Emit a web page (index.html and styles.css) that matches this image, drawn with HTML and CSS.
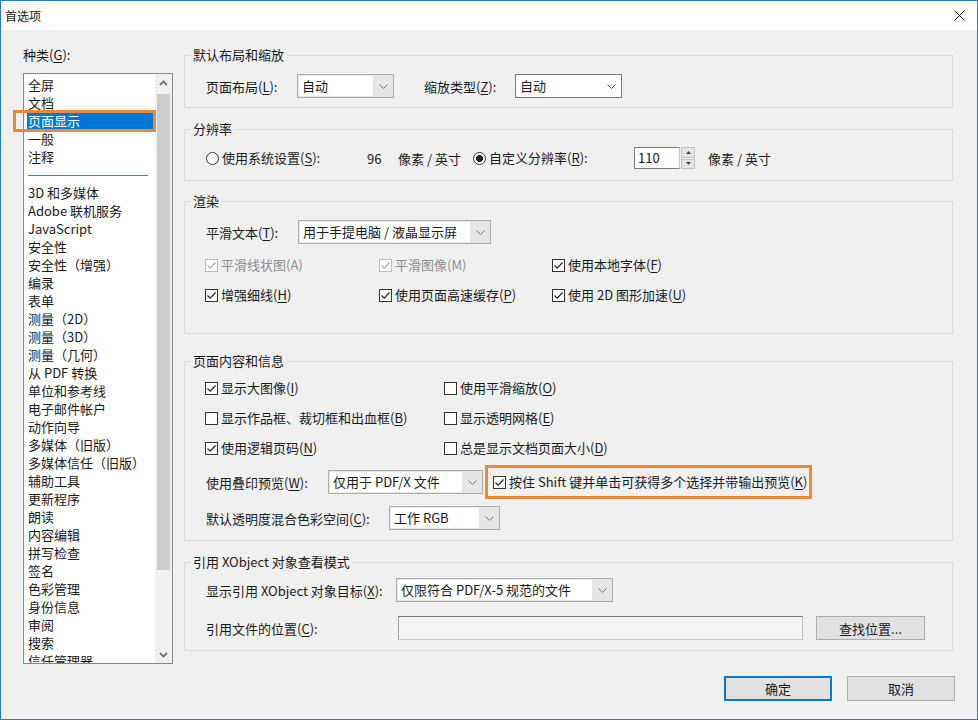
FILE: index.html
```html
<!DOCTYPE html>
<html lang="zh-CN">
<head>
    <meta charset="UTF-8">
    <title>首选项</title>
    <link rel="stylesheet" href="styles.css">
</head>
<body>
<div class="window">
    <div class="titlebar">
        <span class="title">首选项</span>
        <svg class="close" width="11" height="11" viewBox="0 0 11 11"><path d="M0.5 0.5L10.5 10.5M10.5 0.5L0.5 10.5" stroke="#111" stroke-width="1" fill="none"/></svg>
    </div>

    <div class="main">
        <div class="sidebar">
            <div class="caption">种类(<u>G</u>):</div>
            <div class="listbox">
                <ul class="items">
                    <li>全屏</li>
                    <li>文档</li>
                    <li class="sel">页面显示</li>
                    <li>一般</li>
                    <li>注释</li>
                    <li class="sep"><span></span></li>
                    <li>3D 和多媒体</li>
                    <li>Adobe 联机服务</li>
                    <li>JavaScript</li>
                    <li>安全性</li>
                    <li>安全性（增强）</li>
                    <li>编录</li>
                    <li>表单</li>
                    <li>测量（2D）</li>
                    <li>测量（3D）</li>
                    <li>测量（几何）</li>
                    <li>从 PDF 转换</li>
                    <li>单位和参考线</li>
                    <li>电子邮件帐户</li>
                    <li>动作向导</li>
                    <li>多媒体（旧版）</li>
                    <li>多媒体信任（旧版）</li>
                    <li>辅助工具</li>
                    <li>更新程序</li>
                    <li>朗读</li>
                    <li>内容编辑</li>
                    <li>拼写检查</li>
                    <li>签名</li>
                    <li>色彩管理</li>
                    <li>身份信息</li>
                    <li>审阅</li>
                    <li>搜索</li>
                    <li>信任管理器</li>
                </ul>
                <div class="vscroll">
                    <span class="sarrow"><svg width="9" height="6" viewBox="0 0 9 6"><path d="M1 5L4.5 1.5L8 5" fill="none" stroke="#606060" stroke-width="1.6"/></svg></span>
                    <span class="thumb"></span>
                    <span class="track"></span>
                    <span class="sarrow"><svg width="9" height="6" viewBox="0 0 9 6"><path d="M1 1L4.5 4.5L8 1" fill="none" stroke="#606060" stroke-width="1.6"/></svg></span>
                </div>
            </div>
            <div class="mark"></div>
        </div>

        <div class="panel">
            <!-- 默认布局和缩放 -->
            <div class="group g1">
                <div class="group-title">默认布局和缩放</div>
                <div class="row r24 mt10">
                    <span class="lbl" style="width:91px">页面布局(<u>L</u>):</span>
                    <div class="combo" style="width:97px"><span class="val">自动</span><span class="drop"><svg width="9" height="5" viewBox="0 0 9 5"><path d="M0.5 0.5L4.5 4.5L8.5 0.5" fill="none" stroke="#777"/></svg></span></div>
                    <span class="lbl" style="width:91px;margin-left:30px">缩放类型(<u>Z</u>):</span>
                    <div class="combo plain" style="width:107px"><span class="val">自动</span><span class="drop"><svg width="9" height="5" viewBox="0 0 9 5"><path d="M0.5 0.5L4.5 4.5L8.5 0.5" fill="none" stroke="#555"/></svg></span></div>
                </div>
            </div>

            <!-- 分辨率 -->
            <div class="group g2">
                <div class="group-title">分辨率</div>
                <div class="row r22 mt9">
                    <span class="opt" style="width:161px"><span class="rb"></span>使用系统设置(<u>S</u>):</span>
                    <span style="width:31px">96</span>
                    <span style="width:75px">像素 / 英寸</span>
                    <span class="opt" style="width:161px"><span class="rb on"></span>自定义分辨率(<u>R</u>):</span>
                    <div class="spin">
                        <span class="field">110</span>
                        <span class="btns">
                            <span><svg width="5" height="3" viewBox="0 0 5 3"><path d="M0 3L2.5 0L5 3Z" fill="#444"/></svg></span>
                            <span><svg width="5" height="3" viewBox="0 0 5 3"><path d="M0 0L2.5 3L5 0Z" fill="#444"/></svg></span>
                        </span>
                    </div>
                    <span style="margin-left:13px">像素 / 英寸</span>
                </div>
            </div>

            <!-- 渲染 -->
            <div class="group g3">
                <div class="group-title">渲染</div>
                <div class="row r24 mt10">
                    <span class="lbl" style="width:92px">平滑文本(<u>T</u>):</span>
                    <div class="combo" style="width:193px"><span class="val">用于手提电脑 / 液晶显示屏</span><span class="drop"><svg width="9" height="5" viewBox="0 0 9 5"><path d="M0.5 0.5L4.5 4.5L8.5 0.5" fill="none" stroke="#777"/></svg></span></div>
                </div>
                <div class="checks cols3 mt12">
                    <span class="opt dis"><span class="cb"><svg width="11" height="11" viewBox="0 0 11 11"><path d="M1.5 5.5L4.2 8.2L9.5 2.5" fill="none" stroke="#aaa" stroke-width="1.2"/></svg></span>平滑线状图(A)</span>
                    <span class="opt dis"><span class="cb"><svg width="11" height="11" viewBox="0 0 11 11"><path d="M1.5 5.5L4.2 8.2L9.5 2.5" fill="none" stroke="#aaa" stroke-width="1.2"/></svg></span>平滑图像(M)</span>
                    <span class="opt"><span class="cb"><svg width="11" height="11" viewBox="0 0 11 11"><path d="M1.5 5.5L4.2 8.2L9.5 2.5" fill="none" stroke="#222" stroke-width="1.2"/></svg></span>使用本地字体(<u>F</u>)</span>
                    <span class="opt"><span class="cb"><svg width="11" height="11" viewBox="0 0 11 11"><path d="M1.5 5.5L4.2 8.2L9.5 2.5" fill="none" stroke="#222" stroke-width="1.2"/></svg></span>增强细线(<u>H</u>)</span>
                    <span class="opt"><span class="cb"><svg width="11" height="11" viewBox="0 0 11 11"><path d="M1.5 5.5L4.2 8.2L9.5 2.5" fill="none" stroke="#222" stroke-width="1.2"/></svg></span>使用页面高速缓存(<u>P</u>)</span>
                    <span class="opt"><span class="cb"><svg width="11" height="11" viewBox="0 0 11 11"><path d="M1.5 5.5L4.2 8.2L9.5 2.5" fill="none" stroke="#222" stroke-width="1.2"/></svg></span>使用 2D 图形加速(<u>U</u>)</span>
                </div>
            </div>

            <!-- 页面内容和信息 -->
            <div class="group g4">
                <div class="group-title">页面内容和信息</div>
                <div class="checks cols2 mt9">
                    <span class="opt"><span class="cb"><svg width="11" height="11" viewBox="0 0 11 11"><path d="M1.5 5.5L4.2 8.2L9.5 2.5" fill="none" stroke="#222" stroke-width="1.2"/></svg></span>显示大图像(<u>I</u>)</span>
                    <span class="opt"><span class="cb"></span>使用平滑缩放(<u>O</u>)</span>
                    <span class="opt"><span class="cb"></span>显示作品框、裁切框和出血框(<u>B</u>)</span>
                    <span class="opt"><span class="cb"></span>显示透明网格(<u>E</u>)</span>
                    <span class="opt"><span class="cb"><svg width="11" height="11" viewBox="0 0 11 11"><path d="M1.5 5.5L4.2 8.2L9.5 2.5" fill="none" stroke="#222" stroke-width="1.2"/></svg></span>使用逻辑页码(<u>N</u>)</span>
                    <span class="opt"><span class="cb"></span>总是显示文档页面大小(<u>D</u>)</span>
                </div>
                <div class="row r34 mt8">
                    <span class="lbl" style="width:122px">使用叠印预览(<u>W</u>):</span>
                    <div class="combo" style="width:155px"><span class="val">仅用于 PDF/X 文件</span><span class="drop"><svg width="9" height="5" viewBox="0 0 9 5"><path d="M0.5 0.5L4.5 4.5L8.5 0.5" fill="none" stroke="#777"/></svg></span></div>
                    <div class="hl">
                        <span class="opt"><span class="cb"><svg width="11" height="11" viewBox="0 0 11 11"><path d="M1.5 5.5L4.2 8.2L9.5 2.5" fill="none" stroke="#222" stroke-width="1.2"/></svg></span>按住 Shift 键并单击可获得多个选择并带输出预览(<u>K</u>)</span>
                    </div>
                </div>
                <div class="row r24 mt7">
                    <span class="lbl" style="width:183px">默认透明度混合色彩空间(<u>C</u>):</span>
                    <div class="combo" style="width:111px"><span class="val">工作 RGB</span><span class="drop"><svg width="9" height="5" viewBox="0 0 9 5"><path d="M0.5 0.5L4.5 4.5L8.5 0.5" fill="none" stroke="#777"/></svg></span></div>
                </div>
            </div>

            <!-- 引用 XObject 对象查看模式 -->
            <div class="group g5">
                <div class="group-title">引用 XObject 对象查看模式</div>
                <div class="row r24 mt7">
                    <span class="lbl" style="width:190px">显示引用 XObject 对象目标(<u>X</u>):</span>
                    <div class="combo" style="width:217px"><span class="val">仅限符合 PDF/X-5 规范的文件</span><span class="drop"><svg width="9" height="5" viewBox="0 0 9 5"><path d="M0.5 0.5L4.5 4.5L8.5 0.5" fill="none" stroke="#777"/></svg></span></div>
                </div>
                <div class="row r24 mt14">
                    <span class="lbl" style="width:192px">引用文件的位置(<u>C</u>):</span>
                    <span class="textbox"></span>
                    <button class="btn small">查找位置...</button>
                </div>
            </div>
        </div>
    </div>

    <div class="footer">
        <button class="btn default">确定</button>
        <button class="btn">取消</button>
    </div>
</div>
</body>
</html>
```

FILE: styles.css
```css
* {
    box-sizing: border-box;
}
body {
    margin: 0;
    background: #ffffff;
    font-family: "Noto Sans CJK SC", "Microsoft YaHei", sans-serif;
    font-size: 13px;
    color: #1a1a1a;
}
u {
    text-underline-offset: 2px;
}
.window {
    width: 978px;
    height: 720px;
    border: 1px solid #1c7fd0;
    background: #f0f0f0;
    display: flex;
    flex-direction: column;
}
.titlebar {
    height: 29px;
    flex: none;
    background: #ffffff;
    display: flex;
    align-items: center;
    justify-content: space-between;
    padding: 0 12px 0 4px;
    font-size: 12px;
}
.main {
    display: flex;
    height: 640px;
    flex: none;
}

/* left list */
.sidebar {
    width: 183px;
    flex: none;
    padding: 16px 0 0 22px;
    position: relative;
}
.caption {
    line-height: 18px;
}
.listbox {
    margin-top: 9px;
    width: 150px;
    height: 591px;
    border: 1px solid #828790;
    background: #ffffff;
    display: flex;
}
.items {
    list-style: none;
    margin: 0;
    padding: 2px 0 0;
    flex: 1;
    overflow: hidden;
    line-height: 18px;
}
.items li {
    height: 18px;
    padding-left: 4px;
    white-space: nowrap;
}
.items li.sel {
    background: #0078d7;
    color: #ffffff;
    margin-left: 3px;
    padding-left: 1px;
}
.items li.sep {
    padding-top: 9px;
}
.items li.sep span {
    display: block;
    width: 120px;
    border-top: 1px solid #3d7fc0;
}
.vscroll {
    width: 17px;
    flex: none;
    background: #f0f0f0;
    display: flex;
    flex-direction: column;
}
.sarrow {
    height: 17px;
    flex: none;
    display: flex;
    align-items: center;
    justify-content: center;
}
.thumb {
    margin: 3px 2px 0;
    height: 476px;
    background: #cdcdcd;
}
.track {
    flex: 1;
}
.mark {
    position: absolute;
    left: 12px;
    top: 80px;
    width: 143px;
    height: 22px;
    border: 3px solid #ee8a35;
}

/* right panel */
.panel {
    width: 769px;
    flex: none;
}
.group {
    border: 1px solid #dcdcdc;
    padding-left: 21px;
}
.group-title {
    display: table;
    margin: -10px 0 0 -15px;
    padding: 0 2px;
    background: #f0f0f0;
    line-height: 18px;
}
.g1 { margin-top: 25px; padding-bottom: 9px; }
.g2 { margin-top: 21px; padding-bottom: 11px; }
.g3 { margin-top: 20px; padding-bottom: 29px; }
.g4 { margin-top: 27px; padding-bottom: 10px; }
.g5 { margin-top: 21px; padding-bottom: 10px; }

.mt7 { margin-top: 7px; }
.mt8 { margin-top: 8px; }
.mt9 { margin-top: 9px; }
.mt10 { margin-top: 10px; }
.mt12 { margin-top: 12px; }
.mt14 { margin-top: 14px; }

.row {
    display: flex;
    align-items: center;
    white-space: nowrap;
}
.r22 { height: 22px; }
.r24 { height: 24px; }
.r34 { height: 34px; }
.lbl {
    flex: none;
}

.combo {
    height: 24px;
    flex: none;
    display: flex;
    border: 1px solid #adadad;
    background: #e5e5e5;
    padding: 1px 0 1px 1px;
}
.combo .val {
    flex: 1;
    background: #ffffff;
    padding-left: 3px;
    line-height: 20px;
    overflow: hidden;
}
.combo .drop {
    width: 20px;
    flex: none;
    display: flex;
    align-items: center;
    justify-content: center;
}
.combo.plain {
    background: #ffffff;
    border-color: #7a7a7a;
}

.opt {
    display: inline-flex;
    align-items: center;
    white-space: nowrap;
    line-height: 18px;
}
.opt.dis {
    color: #8e8e8e;
}
.cb {
    width: 13px;
    height: 13px;
    flex: none;
    border: 1px solid #333333;
    background: #ffffff;
    margin-right: 3px;
    display: flex;
    align-items: center;
    justify-content: center;
}
.dis .cb {
    border-color: #bcbcbc;
}
.rb {
    width: 13px;
    height: 13px;
    flex: none;
    border: 1px solid #333333;
    border-radius: 50%;
    background: #ffffff;
    margin-right: 3px;
}
.rb.on {
    background: radial-gradient(circle, #222222 0 3.2px, #ffffff 3.8px);
}

.checks {
    display: grid;
    row-gap: 12px;
    margin-left: -1px;
}
.cols3 {
    grid-template-columns: 174px 173px 1fr;
}
.cols2 {
    grid-template-columns: 239px 1fr;
}

.spin {
    display: flex;
    height: 22px;
}
.spin .field {
    width: 46px;
    border: 1px solid #7a7a7a;
    border-right-color: #c8c8c8;
    background: #ffffff;
    padding-left: 3px;
    line-height: 20px;
}
.spin .btns {
    width: 14px;
    margin-left: 1px;
    display: flex;
    flex-direction: column;
    gap: 1px;
}
.spin .btns span {
    flex: 1;
    background: #e6e6e6;
    border: 1px solid #c4c4c4;
    display: flex;
    align-items: center;
    justify-content: center;
}

.hl {
    margin-left: 2px;
    width: 327px;
    height: 34px;
    border: 3px solid #ee8a35;
    padding-left: 5px;
    display: flex;
    align-items: center;
}

.textbox {
    width: 405px;
    height: 24px;
    border: 1px solid #c2c2c2;
    border-top-color: #7a7a7a;
    border-left-color: #a0a0a0;
    background: #f4f4f4;
}
.btn {
    font-family: inherit;
    font-size: 13px;
    color: #1a1a1a;
    width: 108px;
    height: 25px;
    border: 1px solid #adadad;
    background: #e1e1e1;
    padding: 0;
}
.btn.small {
    width: 109px;
    height: 24px;
    margin-left: 13px;
}
.btn.default {
    border: 2px solid #0078d7;
}

.footer {
    display: flex;
    justify-content: flex-end;
    gap: 15px;
    padding: 6px 22px 0 0;
}
```
